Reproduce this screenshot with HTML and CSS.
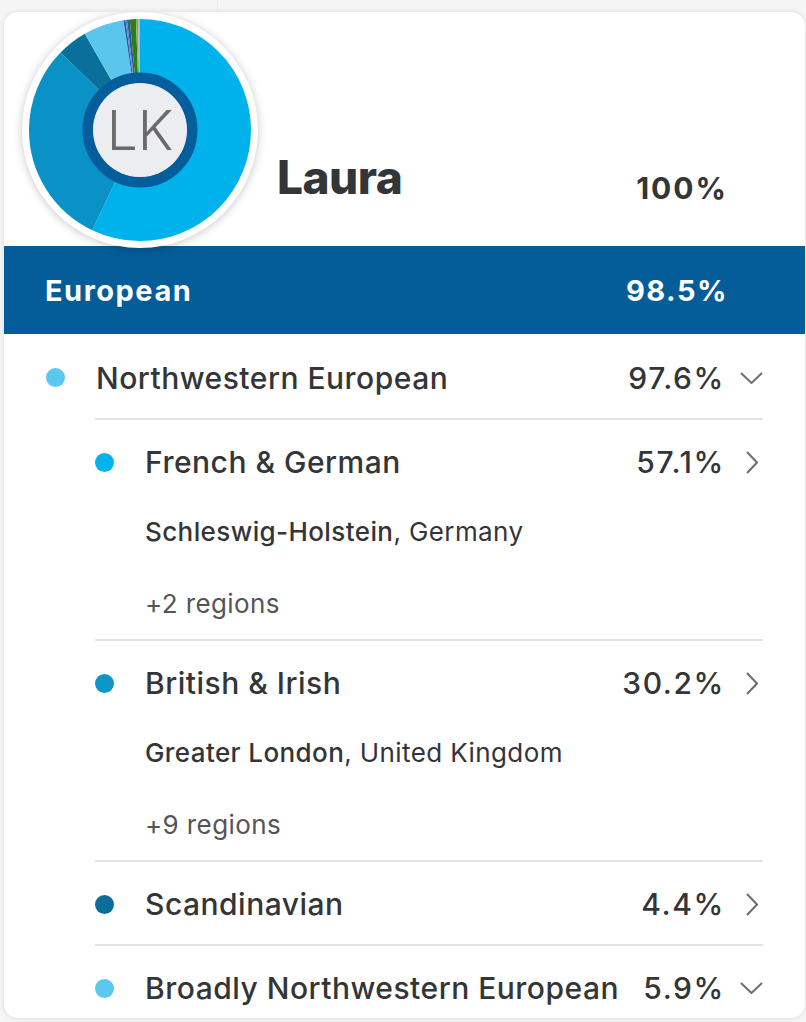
FILE: index.html
```html
<!DOCTYPE html>
<html lang="en">
<head>
<meta charset="utf-8">
<title>Laura – Ethnicity</title>
<link rel="stylesheet" href="styles.css">
</head>
<body>
<div class="topline"></div>
<div class="card">
  <div class="header">
    <div class="avatar">
      <svg width="240" height="240" viewBox="0 0 240 240">
        <circle cx="120" cy="120" r="118" fill="#fff"/>
        <g transform="rotate(-90 120 120)" fill="none" stroke-width="54">
          <circle cx="120" cy="120" r="84" pathLength="100" stroke="#00b2eb" stroke-dasharray="57.1 100" stroke-dashoffset="0"/>
          <circle cx="120" cy="120" r="84" pathLength="100" stroke="#0a92c7" stroke-dasharray="30.2 100" stroke-dashoffset="-57.1"/>
          <circle cx="120" cy="120" r="84" pathLength="100" stroke="#0b6f9b" stroke-dasharray="4.4 100" stroke-dashoffset="-87.3"/>
          <circle cx="120" cy="120" r="84" pathLength="100" stroke="#5bc6ed" stroke-dasharray="5.9 100" stroke-dashoffset="-91.7"/>
          <circle cx="120" cy="120" r="84" pathLength="100" stroke="#2d5fa6" stroke-dasharray="0.3 100" stroke-dashoffset="-97.6"/>
          <circle cx="120" cy="120" r="84" pathLength="100" stroke="#4f8fd4" stroke-dasharray="0.2 100" stroke-dashoffset="-97.9"/>
          <circle cx="120" cy="120" r="84" pathLength="100" stroke="#2b5c9e" stroke-dasharray="0.4 100" stroke-dashoffset="-98.1"/>
          <circle cx="120" cy="120" r="84" pathLength="100" stroke="#2f7a1c" stroke-dasharray="0.9 100" stroke-dashoffset="-98.5"/>
          <circle cx="120" cy="120" r="84" pathLength="100" stroke="#6cc13c" stroke-dasharray="0.3 100" stroke-dashoffset="-99.4"/>
          <circle cx="120" cy="120" r="84" pathLength="100" stroke="#c9a3d4" stroke-dasharray="0.3 100" stroke-dashoffset="-99.7"/>
        </g>
        <circle cx="120" cy="120" r="52" fill="none" stroke="#045e9c" stroke-width="11"/>
        <circle cx="120" cy="120" r="47" fill="#ebedf0"/>
        <text x="120" y="140" class="initials" text-anchor="middle">LK</text>
      </svg>
    </div>
    <div class="name">Laura</div>
    <div class="total">100%</div>
  </div>

  <div class="bar">
    <span class="bar-label">European</span>
    <span class="bar-pct">98.5%</span>
  </div>

  <div class="list">
    <div class="row top-row">
      <span class="dot dot-nw"></span>
      <span class="label">Northwestern European</span>
      <span class="pct">97.6%</span>
      <span class="chev"><svg class="chev-down" width="23" height="12" viewBox="0 0 23 12"><path d="M1 1 L11.5 11 L22 1" fill="none" stroke="#6b6e70" stroke-width="2"/></svg></span>
    </div>
    <div class="children">
      <div class="child">
        <div class="row">
          <span class="dot dot-fg"></span>
          <span class="label">French &amp; German</span>
          <span class="pct">57.1%</span>
          <span class="chev"><svg class="chev-right" width="12" height="23" viewBox="0 0 12 23"><path d="M1 1 L11 11.5 L1 22" fill="none" stroke="#6b6e70" stroke-width="2"/></svg></span>
        </div>
        <div class="loc"><span class="loc-main">Schleswig-Holstein</span>, Germany</div>
        <div class="more">+2 regions</div>
      </div>
      <div class="child">
        <div class="row">
          <span class="dot dot-bi"></span>
          <span class="label">British &amp; Irish</span>
          <span class="pct">30.2%</span>
          <span class="chev"><svg class="chev-right" width="12" height="23" viewBox="0 0 12 23"><path d="M1 1 L11 11.5 L1 22" fill="none" stroke="#6b6e70" stroke-width="2"/></svg></span>
        </div>
        <div class="loc"><span class="loc-main">Greater London</span>, United Kingdom</div>
        <div class="more">+9 regions</div>
      </div>
      <div class="child">
        <div class="row">
          <span class="dot dot-sc"></span>
          <span class="label">Scandinavian</span>
          <span class="pct">4.4%</span>
          <span class="chev"><svg class="chev-right" width="12" height="23" viewBox="0 0 12 23"><path d="M1 1 L11 11.5 L1 22" fill="none" stroke="#6b6e70" stroke-width="2"/></svg></span>
        </div>
      </div>
      <div class="child">
        <div class="row">
          <span class="dot dot-nw"></span>
          <span class="label">Broadly Northwestern European</span>
          <span class="pct">5.9%</span>
          <span class="chev"><svg class="chev-down" width="23" height="12" viewBox="0 0 23 12"><path d="M1 1 L11.5 11 L22 1" fill="none" stroke="#6b6e70" stroke-width="2"/></svg></span>
        </div>
      </div>
    </div>
  </div>
</div>
</body>
</html>
```

FILE: styles.css
```css
* { box-sizing: border-box; }

html, body {
  margin: 0;
  padding: 0;
}

body {
  background: #f5f5f5;
  font-family: "Inter", "Lato", sans-serif;
  color: #333537;
  height: 1022px;
  overflow: hidden;
}

.topline {
  height: 12px;
  width: 218px;
  border-right: 1px solid #ececec;
}

.card {
  margin: 0 1px 0 4px;
  height: 1006px;
  background: #fff;
  border-radius: 14px;
  box-shadow: 0 0 5px rgba(0, 0, 0, 0.12);
  overflow: hidden;
}

.header {
  height: 234px;
  display: flex;
  align-items: flex-start;
  padding-right: 77px;
}

.avatar {
  width: 240px;
  height: 240px;
  margin-left: 16px;
  margin-top: -2px;
  flex: none;
  position: relative;
  z-index: 2;
}

.avatar svg {
  display: block;
  overflow: visible;
  filter: drop-shadow(0 1px 4px rgba(0, 0, 0, 0.22));
}

.initials {
  font-family: "Inter", "Lato", sans-serif;
  font-weight: 300;
  font-size: 55px;
  fill: #6a6a6a;
}

.name {
  font-weight: 800;
  font-size: 46px;
  line-height: 48px;
  margin-top: 141px;
  margin-left: 17px;
  flex: 1;
  letter-spacing: -0.5px;
}

.total {
  font-weight: 700;
  font-size: 30px;
  line-height: 30px;
  margin-top: 161px;
  letter-spacing: 2px;
}

.bar {
  height: 88px;
  background: #045c99;
  color: #fff;
  display: flex;
  align-items: center;
  justify-content: space-between;
  padding: 0 77px 0 41px;
  font-weight: 700;
  font-size: 29px;
  letter-spacing: 1.5px;
}

.list {
  padding: 0 42px 0 42px;
}

.row {
  display: flex;
  align-items: center;
  height: 82px;
  padding-top: 2px;
}

.top-row {
  height: 84px;
  padding-top: 3px;
}

.dot {
  width: 19px;
  height: 19px;
  border-radius: 50%;
  flex: none;
  margin-right: 31px;
}

.dot-nw { background: #5bc8ef; }
.dot-fg { background: #00b2eb; }
.dot-bi { background: #0e95c8; }
.dot-sc { background: #0b6e9a; }

.label {
  flex: 1;
  font-size: 30px;
  font-weight: 500;
  letter-spacing: 0.5px;
  white-space: nowrap;
}

.pct {
  font-size: 30px;
  font-weight: 500;
  letter-spacing: 1.6px;
  margin-right: -3px;
}

.chev {
  width: 41px;
  flex: none;
  display: flex;
  justify-content: flex-end;
  align-items: center;
}

.chev-right { margin-right: 5px; }

.children {
  margin-left: 49px;
}

.child {
  border-top: 2px solid #e4e4e4;
}

.loc {
  margin-top: 12px;
  line-height: 36px;
  font-size: 26px;
  letter-spacing: 0.4px;
  padding-left: 50px;
}

.loc-main { font-weight: 500; }

.more {
  margin-top: 36px;
  margin-bottom: 17px;
  line-height: 36px;
  font-size: 26px;
  letter-spacing: 0.4px;
  color: #555;
  padding-left: 50px;
}
```
